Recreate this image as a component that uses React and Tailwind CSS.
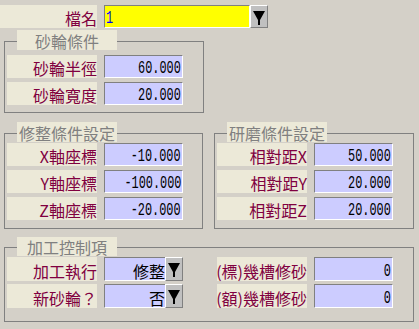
import React from "react";

const CJK = "font-['Noto_Sans_CJK_TC',sans-serif]";

function Label({ children, w = "w-[90px]" }) {
  return (
    <div
      className={`${w} h-full shrink-0 bg-[#ece9d8] text-[#800040] flex items-center justify-end text-[16px] leading-[18px] pt-[3px] whitespace-nowrap font-['Noto_Sans_CJK_TC',sans-serif]`}
    >
      {children}
    </div>
  );
}

function Value({ children, w = "w-[79px]" }) {
  return (
    <div
      className={`${w} h-full shrink-0 bg-[#ccccff] border-t border-l border-t-[#808080] border-l-[#808080] border-b border-r border-b-white border-r-white flex items-center justify-end pr-[1px] pt-[3px]`}
    >
      <span className="inline-block font-['Liberation_Mono',monospace] text-[18px] leading-[18px] scale-x-[0.66] origin-right text-black whitespace-nowrap">
        {children}
      </span>
    </div>
  );
}

function ComboValue({ children }) {
  return (
    <div className="w-[61px] h-full shrink-0 bg-[#ccccff] border-t border-l border-t-[#808080] border-l-[#808080] border-b border-b-white flex items-center justify-end pt-[3px]">
      <span className="font-['Noto_Sans_CJK_TC',sans-serif] text-[16px] leading-[18px] text-black whitespace-nowrap">
        {children}
      </span>
    </div>
  );
}

function DropButton() {
  return (
    <div className="w-[18px] h-full shrink-0 bg-[#c0c0c0] border-t border-l border-t-white border-l-white border-b border-r border-b-[#808080] border-r-[#808080] flex items-center justify-center pt-[2px]">
      <svg width="12" height="14" viewBox="0 0 12 14">
        <polygon points="0,0 12,0 7,9 7,14 5,14 5,9" fill="#000" />
      </svg>
    </div>
  );
}

function Row({ label, children, h = "h-[23px]" }) {
  return (
    <div className={`flex ${h} gap-[7px]`}>
      <Label>{label}</Label>
      {children}
    </div>
  );
}

function Group({ legend, className, children, legendTop = "top-[-12px]", legendH = "h-[20px]" }) {
  return (
    <div className={`relative border border-[#808080] ${className}`}>
      <div
        className={`absolute left-[12px] ${legendTop} w-[100px] ${legendH} bg-[#ece9d8] text-[#808080] flex items-center justify-center text-[16px] leading-[18px] pt-[1px] ${CJK}`}
      >
        {legend}
      </div>
      {children}
    </div>
  );
}

export default function App() {
  return (
    <div className="w-[419px] h-[329px] bg-[#d4d0c8] overflow-hidden">
      {/* 檔名 */}
      <div className="flex pt-[5px]">
        <div className="flex h-[23px]">
          <Label w="w-[97px]">檔名</Label>
          <div className="ml-[7px] w-[146px] h-full bg-[#ffff00] border-t border-l border-t-[#808080] border-l-[#808080] border-b border-r border-b-white border-r-white flex items-center pl-[1px] pt-[3px]">
            <span className="inline-block font-['Liberation_Mono',monospace] text-[18px] leading-[18px] scale-x-[0.66] origin-left text-[#0000ff]">
              1
            </span>
          </div>
          <DropButton />
        </div>
      </div>

      {/* 砂輪條件 */}
      <Group legend="砂輪條件" className="mt-[13px] ml-[4px] w-[200px] h-[72px]">
        <div className="flex flex-col gap-[4px] pt-[13px] pl-[2px]">
          <Row label="砂輪半徑">
            <Value>60.000</Value>
          </Row>
          <Row label="砂輪寬度">
            <Value>20.000</Value>
          </Row>
        </div>
      </Group>

      {/* 修整 / 研磨 */}
      <div className="flex mt-[20px] ml-[4px] gap-[11px]">
        <Group legend="修整條件設定" className="w-[199px] h-[96px]">
          <div className="flex flex-col gap-[4px] pt-[9px] pl-[2px]">
            <Row label="X軸座標">
              <Value>-10.000</Value>
            </Row>
            <Row label="Y軸座標">
              <Value>-100.000</Value>
            </Row>
            <Row label="Z軸座標">
              <Value>-20.000</Value>
            </Row>
          </div>
        </Group>
        <Group legend="研磨條件設定" className="w-[200px] h-[96px]">
          <div className="flex flex-col gap-[4px] pt-[9px] pl-[2px]">
            <Row label="相對距X">
              <Value>50.000</Value>
            </Row>
            <Row label="相對距Y">
              <Value>20.000</Value>
            </Row>
            <Row label="相對距Z">
              <Value>20.000</Value>
            </Row>
          </div>
        </Group>
      </div>

      {/* 加工控制項 */}
      <Group
        legend="加工控制項"
        legendTop="top-[-11px]"
        legendH="h-[19px]"
        className="mt-[18px] ml-[4px] w-[410px] h-[75px]"
      >
        <div className="flex pt-[9px] pl-[2px] gap-[34px]">
          <div className="flex flex-col gap-[3px]">
            <Row label="加工執行" h="h-[24px]">
              <div className="flex h-full">
                <ComboValue>修整</ComboValue>
                <DropButton />
              </div>
            </Row>
            <Row label="新砂輪？" h="h-[24px]">
              <div className="flex h-full">
                <ComboValue>否</ComboValue>
                <DropButton />
              </div>
            </Row>
          </div>
          <div className="flex flex-col gap-[3px]">
            <Row label="(標)幾槽修砂" h="h-[24px]">
              <Value>0</Value>
            </Row>
            <Row label="(額)幾槽修砂" h="h-[24px]">
              <Value>0</Value>
            </Row>
          </div>
        </div>
      </Group>
    </div>
  );
}
